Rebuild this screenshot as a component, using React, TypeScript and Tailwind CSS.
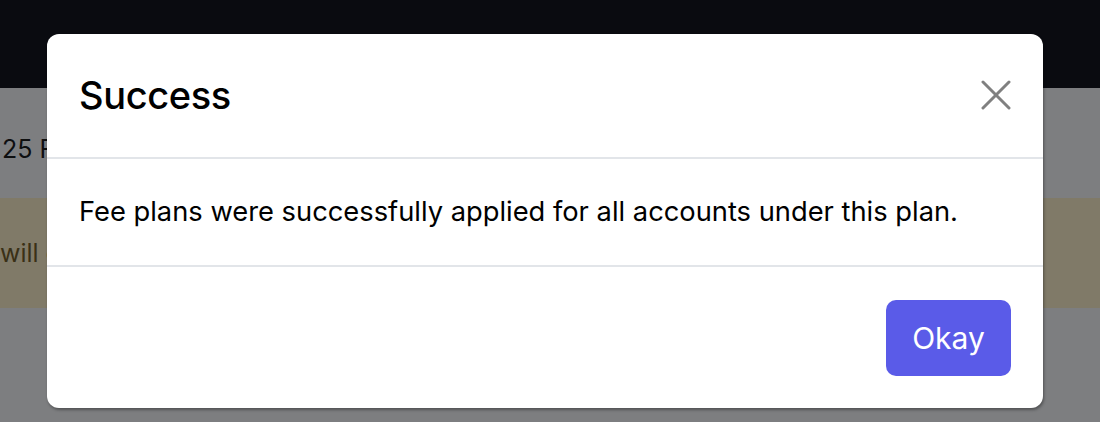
export default function App() {
  return (
    <div className="relative h-[422px] w-[1100px] overflow-hidden bg-[#7d7e80] font-['Inter',sans-serif]">
      {/* page behind the overlay */}
      <div className="h-[88px] bg-[#0a0b10]" />
      <div className="flex h-[110px] items-center pl-[2px] pt-[14px] text-[25px] text-[#0e0f10]">
        <span>25 Fee plans</span>
      </div>
      <div className="flex h-[110px] items-center bg-[#807a68] pt-[2px] text-[25px] text-[#3a3016]">
        <span>will only take effect</span>
      </div>

      {/* modal */}
      <div className="absolute left-[47px] top-[34px] flex h-[374px] w-[996px] flex-col rounded-xl bg-white shadow-[1px_2px_3px_rgba(0,0,0,0.35)]">
        <div className="flex h-[125px] items-center justify-between border-b-2 border-[#e2e5e9] pl-8 pr-8">
          <h2 className="text-[38px] font-medium tracking-[-0.01em] text-black">Success</h2>
          <button type="button" aria-label="Close" className="-mt-[2px]">
            <svg width="30" height="30" viewBox="0 0 30 30" fill="none" stroke="#808080" strokeWidth="3" strokeLinecap="round">
              <line x1="2" y1="2" x2="28" y2="28" />
              <line x1="28" y1="2" x2="2" y2="28" />
            </svg>
          </button>
        </div>
        <div className="flex h-[108px] items-center border-b-2 border-[#e2e5e9] px-8">
          <p className="text-[27.3px] text-black">
            Fee plans were successfully applied for all accounts under this plan.
          </p>
        </div>
        <div className="flex flex-1 items-start justify-end pr-8 pt-[33px]">
          <button
            type="button"
            className="flex h-[76px] w-[125px] items-center justify-center rounded-[10px] bg-[#5a5be8] text-[30px] text-white"
          >
            Okay
          </button>
        </div>
      </div>
    </div>
  )
}
